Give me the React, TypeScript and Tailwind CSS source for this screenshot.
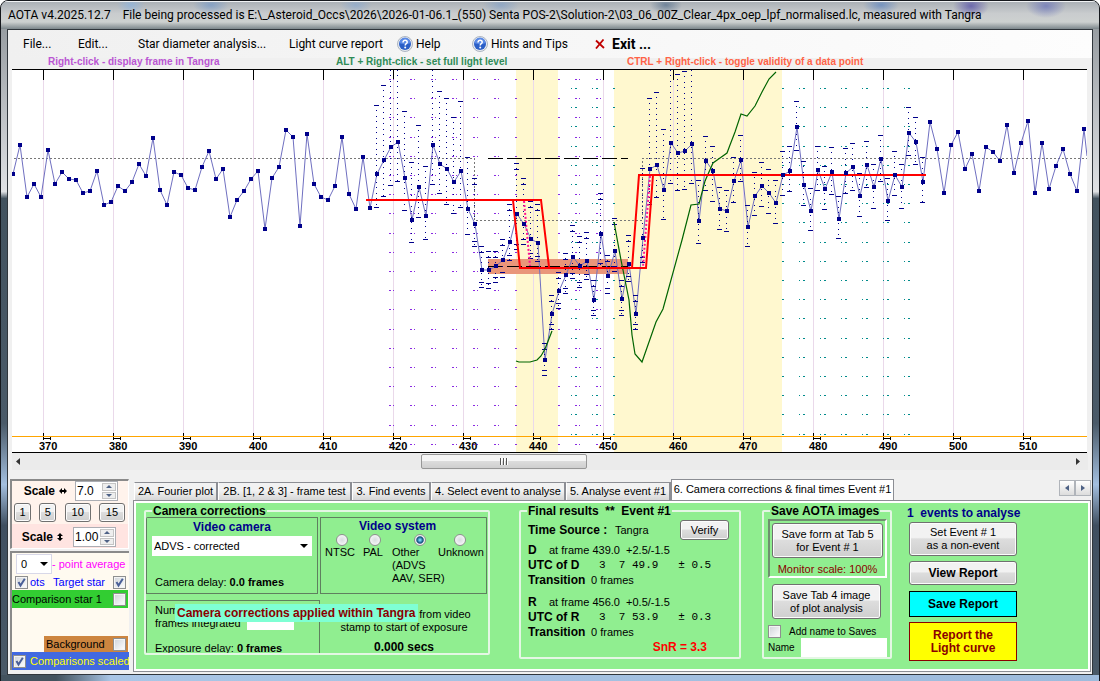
import { ReactNode } from "react";

const UI = "font-['Roboto','Noto_Sans',sans-serif]";
const SANS = "font-['Liberation_Sans',Arial,sans-serif]";

const X0 = 13;
const STEP = 7;

const flux = [
  174, 145, 197, 184, 197, 150, 184, 172, 179, 180, 193, 191, 171, 205, 202, 186, 191, 182, 164, 176,
  138, 190, 205, 172, 175, 188, 190, 167, 151, 179, 169, 217, 200, 191, 179, 171, 229, 178, 167, 130,
  137, 226, 134, 184, 197, 200, 186, 137, 194, 209, 157, 208, 174, 160, 147, 142, 178, 220, 187, 216,
  145, 164, 169, 182, 171, 209, 224, 270, 270, 266, 260, 242, 214, 224, 239, 243, 360, 314, 291, 275,
  257, 266, 261, 300, 234, 276, 251, 299, 264, 314, 238, 169, 165, 190, 143, 153, 151, 144, 221, 161,
  171, 209, 211, 181, 160, 227, 196, 186, 193, 203, 175, 171, 127, 185, 211, 170, 189, 172, 219, 173,
  167, 196, 165, 187, 159, 201, 175, 187, 133, 142, 182, 122, 149, 193, 145, 132, 169, 154, 191, 147,
  152, 161, 125, 173, 143, 121, 193, 143, 189, 166, 149, 174, 191, 129,
];

// [top, bottom] of each error bar, starting at frame index 52
const bars = [
  [105, 207], [85, 196], [70, 185], [70, 181], [111, 210], [162, 242], [125, 217], [166, 239], [70, 184],
  [91, 193], [98, 204], [117, 213], [101, 207], [157, 234], [178, 246], [246, 287], [251, 288], [251, 282],
  [239, 277], [204, 260], [163, 249], [178, 244], [201, 258], [204, 261], [343, 375], [295, 329], [272, 308],
  [253, 293], [225, 278], [236, 287], [232, 279], [280, 315], [193, 268], [255, 293], [218, 271], [280, 315],
  [235, 281], [295, 329], [168, 262], [98, 204], [92, 197], [129, 219], [70, 183], [74, 190], [71, 189],
  [70, 183], [180, 243], [136, 190], [146, 201], [187, 229], [190, 231], [157, 202], [135, 181], [205, 246],
  [172, 215], [162, 206], [169, 213], [180, 223], [151, 195], [146, 191], [101, 150], [161, 205], [188, 230],
  [146, 190], [166, 209], [147, 194], [196, 238], [148, 193], [143, 190], [173, 216], [141, 187], [164, 208],
  [135, 181], [178, 220], [151, 195], [164, 208], [107, 155], [117, 164], [157, 202],
];

const gridXs = Array.from({ length: 15 }, (_, i) => 43 + i * 70);
const violetYs = Array.from({ length: 20 }, (_, i) => Math.round(79 + i * 19.2));
const tealYs = Array.from({ length: 19 }, (_, i) => Math.round(88 + i * 19.2));
const violetXs = [389, 410, 431, 452, 473, 494, 515, 558, 575, 596];
const tealXs = [571, 592, 613, 782, 799, 820, 841, 862, 883, 904];

const LightCurve = () => {
  const line = flux.map((y, i) => `${X0 + i * STEP},${y}`).join(" ") + " 1087,156";
  return (
    <svg viewBox="12 69 1075 384" className="block w-full bg-white" role="img" aria-label="Light curve">
      <g shapeRendering="crispEdges">
        <rect x="516" y="70" width="42" height="382" fill="#fff8cf" />
        <rect x="614" y="70" width="168" height="382" fill="#fff8cf" />
        {gridXs.map((x) => (
          <g key={x}>
            <rect x={x} y="70" width="1" height="368" fill="#ead9ea" />
            <rect x={x} y="70" width="1" height="10" fill="#000" />
          </g>
        ))}
        {violetXs.map((x) =>
          violetYs.map((y) => (
            <g key={`${x}-${y}`} fill="#8a2be2">
              <rect x={x} y={y} width="2" height="1" />
              {x !== 515 && x !== 558 && <rect x={x + 4} y={y} width="1" height="1" />}
            </g>
          ))
        )}
        {tealXs.map((x) =>
          tealYs.map((y) => (
            <g key={`${x}-${y}`} fill="#008b8b">
              <rect x={x} y={y} width={x === 782 || x === 613 ? 2 : 1} height="1" />
              {x !== 782 && x !== 613 && <rect x={x + 4} y={y} width="2" height="1" />}
            </g>
          ))
        )}
        <path d="M14 158.5H474.5V220.5H642.5V158.5H1087" fill="none" stroke="#777" strokeDasharray="2 2" />
        <rect x="488" y="259" width="140" height="15" fill="#e9967a" />
        <path d="M488 158.5H628M488 266.5H628" stroke="#000" strokeDasharray="15 4" />
      </g>

      <polyline points={line} fill="none" stroke="#6f6fc0" strokeWidth="1" />

      <g shapeRendering="crispEdges">
        {bars.map(([top, bottom], i) => {
          const x = X0 + (i + 52) * STEP - 1;
          const twin = x > 470 && x < 645;
          return (
            <g key={x} fill="#00008b">
              <path d={`M${x + 0.5} ${top}V${bottom}`} stroke="#00008b" strokeDasharray="1 4 1 5" />
              {top > 70 && <rect x={x - 2} y={top} width="5" height="1" />}
              <rect x={x - 2} y={bottom} width="5" height="1" />
              {twin && <rect x={x - 2} y={top + 6} width="5" height="1" />}
              {twin && <rect x={x - 2} y={bottom - 5} width="5" height="1" />}
            </g>
          );
        })}
      </g>

      <path
        d="M516 361L519 362H530L537 360L541 356L545 349L552 331M614 222L621 260L629 300L632 335L635 354L642 362L656 322L663 309L682 240L691 205L699 204L705 181L713 163L720 158L727 153L730 145L735 132L741 114L747 116L755 106L762 92L769 79L776 72"
        fill="none"
        stroke="#006400"
        strokeWidth="1.2"
      />
      <path
        d="M366 200H541L549 267M513 200L520 268H646L653 175M632 268L639 175H926"
        fill="none"
        stroke="#f00"
        strokeWidth="2"
      />
      <path d="M524 201L530 266M650 176L643 267" stroke="#ff1493" strokeWidth="2" strokeDasharray="2 2" />

      {flux.map((y, i) => (
        <rect key={i} x={X0 + i * STEP - 2} y={y - 2} width="4" height="4" fill="#00008b" />
      ))}

      <g shapeRendering="crispEdges">
        <rect x="12" y="69" width="1075" height="1" fill="#000" />
        <rect x="12" y="452" width="1075" height="1" fill="#000" />
        {gridXs.map((x) => (
          <path key={x} d={`M${x + 0.5} 433V440M${x + 7.5} 437V440M${x} 438.5H${x + 7}`} stroke="#000" />
        ))}
        <rect x="12" y="436" width="1075" height="1" fill="#ffa500" />
      </g>
      {gridXs.map((x, i) => (
        <text key={x} x={x - 4} y="450" className={`${SANS} text-[11px] font-bold`}>
          {370 + i * 10}
        </text>
      ))}
    </svg>
  );
};

const HelpIcon = () => (
  <svg viewBox="0 0 16 16" className="h-4 w-4 shrink-0">
    <circle cx="8" cy="8" r="7.5" fill="#e8ecf2" stroke="#9aa4b4" strokeWidth="0.8" />
    <circle cx="8" cy="8" r="6" fill="#2b5fc7" />
    <path d="M2.5 7a5.500 5.500 0 0 1 11 0c-3 1.500-8 1.500-11 0z" fill="#5b8ae6" />
    <path d="M6 6.400c0-2.800 4.200-2.600 4.200-.2 0 1.400-2 1.600-2 3.200" fill="none" stroke="#fff" strokeWidth="1.5" />
    <circle cx="8.2" cy="11.5" r="1" fill="#fff" />
  </svg>
);

const CrossIcon = () => (
  <svg viewBox="0 0 10 10" className="h-[10px] w-[10px] shrink-0">
    <path d="M1 1.500L9 9M8.500 0.500L1 9.500" stroke="#c00000" strokeWidth="1.8" />
  </svg>
);

const MenuBar = () => (
  <nav
    className={`${UI} grid h-7 grid-cols-[55px_60px_151px_108px_75px_123px_1fr] items-center bg-linear-to-r from-[#f0f0f0] to-[#fdfdfd] pl-[15px] text-xs whitespace-nowrap`}
  >
    <button className="text-left">File...</button>
    <button className="text-left">Edit...</button>
    <button className="text-left">Star diameter analysis...</button>
    <button className="text-left">Light curve report</button>
    <button className="flex items-center gap-[3px]">
      <HelpIcon />
      Help
    </button>
    <button className="flex items-center gap-[3px]">
      <HelpIcon />
      Hints and Tips
    </button>
    <button className="flex items-center gap-[7px]">
      <CrossIcon />
      <span className="text-sm font-bold">Exit ...</span>
    </button>
  </nav>
);

const Hints = () => (
  <div className={`${SANS} flex h-[11px] pl-10 text-[10px] leading-[8px] font-bold whitespace-nowrap`}>
    <span className="w-72 text-[#ba55d3]">Right-click - display frame in Tangra</span>
    <span className="w-[291px] text-[#2e8b57]">ALT + Right-click - set full light level</span>
    <span className="text-[#ff6347]">CTRL + Right-click - toggle validity of a data point</span>
  </div>
);

const ScrollBar = () => (
  <div className="mx-1 flex h-[17px] items-center justify-between bg-[#ebebeb] px-1">
    <button aria-label="Scroll left" className="w-2">
      <svg viewBox="0 0 4 7" className="h-[7px] w-1"><path d="M4 0V7L0 3.500z" fill="#333" /></svg>
    </button>
    <div className="flex h-full flex-1 pl-[397px]">
      <button
        aria-label="Scroll thumb"
        className="mt-px flex h-[15px] w-[166px] items-center justify-center gap-px rounded-xs border border-[#979797] bg-linear-to-b from-[#f5f5f5] from-45% via-[#dcdcdc] via-50% to-[#cfcfcf]"
      >
        <i className="h-[7px] w-0.5 border-l border-[#555] bg-white" />
        <i className="h-[7px] w-0.5 border-l border-[#555] bg-white" />
        <i className="h-[7px] w-0.5 border-l border-[#555] bg-white" />
      </button>
    </div>
    <button aria-label="Scroll right" className="w-2">
      <svg viewBox="0 0 4 7" className="h-[7px] w-1"><path d="M0 0V7L4 3.500z" fill="#333" /></svg>
    </button>
  </div>
);

const Check = ({ label, checked = false }: { label: string; checked?: boolean }) => (
  <span className="relative inline-block h-[13px] w-[13px] shrink-0">
    <input
      type="checkbox"
      aria-label={label}
      defaultChecked={checked}
      className="peer block h-[13px] w-[13px] appearance-none border border-[#8e8f8f] bg-linear-to-br from-[#cfd3d8] to-white shadow-[inset_0_0_0_1px_#f4f4f4]"
    />
    <svg viewBox="0 0 13 13" className="pointer-events-none absolute inset-0 hidden peer-checked:block">
      <path d="M3.500 6L5.500 9.500L9.800 2.800" fill="none" stroke="#4a5f97" strokeWidth="2" />
    </svg>
  </span>
);

const Spinner = ({ label, value }: { label: string; value: string }) => (
  <span className="flex h-5 w-[43px] border border-[#abadb3] bg-white">
    <input aria-label={label} defaultValue={value} className="w-[26px] pl-px text-xs outline-none" />
    <span className="flex w-[14px] flex-col gap-px py-px">
      <button aria-label={`${label} up`} className="flex flex-1 items-center justify-center border border-[#c4c4c4] bg-[#eee]">
        <svg viewBox="0 0 6 3" className="h-[3px] w-1.5"><path d="M0 3L3 0L6 3z" fill="#4d6185" /></svg>
      </button>
      <button aria-label={`${label} down`} className="flex flex-1 items-center justify-center border border-[#c4c4c4] bg-[#eee]">
        <svg viewBox="0 0 6 3" className="h-[3px] w-1.5"><path d="M0 0L3 3L6 0z" fill="#4d6185" /></svg>
      </button>
    </span>
  </span>
);

const BTN =
  "rounded-[3px] border border-[#707070] bg-linear-to-b from-[#f2f2f2] from-45% via-[#dddddd] via-50% to-[#cfcfcf] shadow-[inset_0_0_0_1px_#fcfcfc]";

const SidePanels = () => (
  <aside className="mb-0.5 ml-0.5 flex w-[119px] shrink-0 flex-col gap-0.5 overflow-hidden text-xs">
    <div className="border-t-2 border-l-2 border-[#8a8a8a] border-r border-b border-r-white border-b-white bg-[#ffe4e1]">
      <div className="bg-[#fff3ec] pb-[2px]">
        <div className="flex items-center justify-end gap-1 pr-2.5">
          <span className="font-bold">Scale</span>
          <svg viewBox="0 0 8 6" className="mr-1 h-1.5 w-2"><path d="M0 3L3 0V2H5V0L8 3L5 6V4H3V6z" /></svg>
          <Spinner label="Horizontal scale" value="7.0" />
        </div>
        <div className="mt-[2px] flex justify-between pr-[3px] pl-[2px] text-[11px] leading-[17px]">
          <button className={`${BTN} w-[17px]`}>1</button>
          <button className={`${BTN} w-[17px]`}>5</button>
          <button className={`${BTN} w-[26px]`}>10</button>
          <button className={`${BTN} w-[26px]`}>15</button>
        </div>
      </div>
      <div className="flex items-center justify-end gap-1 pt-[3px] pr-3 pb-px">
        <span className="font-bold">Scale</span>
        <svg viewBox="0 0 6 8" className="mr-1.5 h-2 w-1.5"><path d="M3 0L6 3H4V5H6L3 8L0 5H2V3H0z" /></svg>
        <Spinner label="Vertical scale" value="1.00" />
      </div>
    </div>

    <div className="flex flex-1 flex-col border-t-2 border-l-2 border-[#8a8a8a] bg-[#fffaf0] text-[11px] whitespace-nowrap">
      <div className="flex items-center pt-px pl-1">
        <span className="relative">
          <select aria-label="Points averaged" className="h-5 w-9 appearance-none border border-[#d8d8e8] bg-white pl-1">
            <option>0</option>
          </select>
          <svg viewBox="0 0 8 4" className="pointer-events-none absolute top-2 right-1 h-1 w-2"><path d="M0 0H8L4 4z" /></svg>
        </span>
        <span className="text-[#ff00ff]">- point average</span>
      </div>
      <div className="flex h-4 items-center pr-[3px] pl-[3px] text-[#0000ff]">
        <Check label="Plots" checked />
        <span className="flex-1 pl-0.5">ots</span>
        <span className="pr-2">Target star</span>
        <Check label="Target star" checked />
      </div>
      <label className="mr-px flex h-[18px] items-center justify-between bg-[#32cd32] pr-[2px]">
        Comparison star 1 <Check label="Comparison star 1" />
      </label>
      <label className="mt-auto mr-px ml-8 flex h-4 items-center justify-between bg-[#cd853f] pr-[2px] pl-0.5">
        Background <Check label="Background" />
      </label>
      <label className="flex h-[18px] items-center gap-1 overflow-hidden bg-[#4169e1] pl-px text-[#ffff00]">
        <Check label="Comparisons scaled" checked /> Comparisons scaled
      </label>
    </div>
  </aside>
);

const tabs = ["2A. Fourier plot", "2B. [1, 2 & 3] - frame test", "3. Find events", "4. Select event to analyse", "5. Analyse event #1"];
const tabWidths = ["w-[84px]", "w-[134px]", "w-[79px]", "w-[135px]", "w-[105px]"];

const Tabs = () => (
  <div className="flex items-end pl-px text-[11px] whitespace-nowrap" role="tablist">
    {tabs.map((tab, i) => (
      <button
        key={tab}
        role="tab"
        className={`${tabWidths[i]} h-[18px] border-t border-r-2 border-l border-[#8c8e94] border-l-white bg-linear-to-b from-[#f2f2f2] from-45% to-[#d6d6d6]`}
      >
        {tab}
      </button>
    ))}
    <button role="tab" aria-selected="true" className="h-[21px] w-[223px] border-t border-r border-l border-[#8c8e94] bg-white pb-px">
      6. Camera corrections & final times Event #1
    </button>
    <div className="mb-[4px] ml-auto flex">
      <button aria-label="Previous tabs" className="flex h-4 w-4 items-center justify-center border border-[#b0b4ba] bg-linear-to-b from-white to-[#dcdcdc]">
        <svg viewBox="0 0 4 6" className="h-1.5 w-1"><path d="M4 0V6L0 3z" fill="#4d6185" /></svg>
      </button>
      <button aria-label="Next tabs" className="flex h-4 w-4 items-center justify-center border border-[#b0b4ba] bg-linear-to-b from-white to-[#dcdcdc]">
        <svg viewBox="0 0 4 6" className="h-1.5 w-1"><path d="M0 0V6L4 3z" fill="#4d6185" /></svg>
      </button>
    </div>
  </div>
);

const Group = ({ title, className, children }: { title: ReactNode; className: string; children: ReactNode }) => (
  <fieldset className={`${className} min-w-0 rounded-xs border-2 border-[#e4f7e4]`}>
    <legend className="ml-1.5 px-px text-xs leading-3 font-bold whitespace-pre">{title}</legend>
    {children}
  </fieldset>
);

const systems = [
  { name: "NTSC", text: "NTSC", radio: "ml-[11px]" },
  { name: "PAL", text: "PAL", radio: "ml-1.5" },
  { name: "Other", text: "Other\n(ADVS\nAAV, SER)", radio: "ml-[22px]" },
  { name: "Unknown", text: "Unknown", radio: "ml-4" },
];

const CameraCorrections = () => (
  <Group title="Camera corrections" className="relative h-[150px] w-[346px] shrink-0 overflow-hidden">
    <div className="flex gap-0.5 pr-px text-[11px]">
      <div className="h-[77px] w-[174px] border border-[#5f7f5f] px-[5px]">
        <label htmlFor="camera" className="block text-center text-xs leading-[18px] font-bold text-[#00008b]">
          Video camera
        </label>
        <div className="relative">
          <select id="camera" className="h-5 w-full appearance-none bg-white pl-[2px]">
            <option>ADVS - corrected</option>
          </select>
          <svg viewBox="0 0 8 4" className="pointer-events-none absolute top-2 right-1 h-1 w-2"><path d="M0 0H8L4 4z" /></svg>
        </div>
        <p className="pt-[18px] pl-[3px] leading-4">
          Camera delay: <b>0.0 frames</b>
        </p>
      </div>
      <div className="h-[77px] flex-1 border border-[#5f7f5f] pl-1">
        <p className="pr-4 text-center text-xs leading-4 font-bold text-[#00008b]">Video system</p>
        <div className="grid grid-cols-[38px_29px_46px_48px] leading-[13px] whitespace-pre">
          {systems.map((s) => (
            <label key={s.name}>
              <input
                type="radio"
                name="system"
                defaultChecked={s.name === "Other"}
                className={`${s.radio} block h-3 w-3 appearance-none rounded-full border border-[#8e8f8f] bg-[radial-gradient(#d8dce0,#ffffff)] checked:bg-[radial-gradient(#6fd0f0_10%,#0c4a78_45%,#f0f0f0_60%)]`}
              />
              {s.text}
            </label>
          ))}
        </div>
      </div>
    </div>
    <div className="mt-1.5 flex text-[11px] leading-[13px]">
      <div className="w-[174px] border border-b-0 border-[#5f7f5f] pt-[3px] pl-2">
        <p>Num</p>
        <p className="flex gap-1.5">
          frames integrated <input aria-label="Frames integrated" className="h-2 w-[47px] self-end bg-white" />
        </p>
        <p className="pt-3">
          Exposure delay: <b>0 frames</b>
        </p>
      </div>
      <div className="flex-1 pt-2 text-center">
        <p className="pl-[82px]">from video</p>
        <p>stamp to start of exposure</p>
        <p className="pt-[7px] text-xs leading-[13px] font-bold">0.000 secs</p>
      </div>
    </div>
    <strong className="absolute top-[87px] left-[29px] bg-[#7fffd4] px-0.5 text-xs leading-[18px] whitespace-nowrap text-[#8b0000]">
      Camera corrections applied within Tangra
    </strong>
  </Group>
);

const results = [
  { id: "D", frame: "at frame 439.0  +2.5/-1.5", utc: "3  7 49.9   ± 0.5" },
  { id: "R", frame: "at frame 456.0  +0.5/-1.5", utc: "3  7 53.9   ± 0.3" },
];

const FinalResults = () => (
  <Group title="Final results  **  Event #1" className="ml-[29px] w-[222px] shrink-0">
    <div className="pr-2.5 pb-0.5 pl-[7px] text-[11px] leading-[15px] whitespace-pre">
      <div className="flex h-[26px] items-center">
        <b className="w-[87px] text-xs">Time Source :</b>
        Tangra
        <button className={`${BTN} ml-auto h-5 w-[49px]`}>Verify</button>
      </div>
      {results.map((r) => (
        <div key={r.id} className="pb-[7px]">
          <p className="flex">
            <b className="w-[21px] text-xs leading-[15px]">{r.id}</b>
            {r.frame}
          </p>
          <p className="flex">
            <b className="w-[71px] text-xs leading-[15px]">UTC of {r.id}</b>
            <span className="font-['Liberation_Mono',monospace]">{r.utc}</span>
          </p>
          <p className="flex">
            <b className="w-[63px] text-xs leading-[15px]">Transition</b>0 frames
          </p>
        </div>
      ))}
      <p className="-mt-2 pr-[22px] text-right text-xs font-bold text-[#ff0000]">SnR = 3.3</p>
    </div>
  </Group>
);

const SaveImages = () => (
  <Group title="Save AOTA images" className="ml-[21px] w-[130px] shrink-0">
    <div className="pr-[3px] pl-1 text-[11px] leading-[13px]">
      <div className="mt-0.5 border-2 border-[#6f8f6f] border-r-white border-b-white p-0.5 pb-0 text-center">
        <button className={`${BTN} h-[35px] w-full`}>
          Save form at Tab 5<br />
          for Event # 1
        </button>
        <p className="pt-1 leading-[14px] whitespace-nowrap text-[#8b0000]">Monitor scale: 100%</p>
      </div>
      <button className={`${BTN} mx-1 mt-1.5 h-[35px] w-[109px]`}>
        Save Tab 4 image
        <br />
        of plot analysis
      </button>
      <label className="mt-1.5 flex items-center gap-2 text-[10px] whitespace-nowrap">
        <Check label="Add name to Saves" />
        Add name to Saves
      </label>
      <label className="flex items-center text-[10px]">
        Name <input className="ml-auto h-[19px] w-[86px] bg-white" />
      </label>
    </div>
  </Group>
);

const Reports = () => (
  <div className="ml-4 flex w-[110px] shrink-0 flex-col items-stretch px-px text-[11px] leading-[13px]">
    <p className="-ml-0.5 pb-px text-xs leading-4 font-bold whitespace-pre text-[#00008b]">1  events to analyse</p>
    <button className={`${BTN} h-[34px]`}>
      Set Event # 1<br />
      as a non-event
    </button>
    <button className={`${BTN} mt-[5px] h-6 text-xs font-bold`}>View Report</button>
    <button className="mt-1.5 h-[26px] border border-black bg-[#00ffff] text-xs font-bold">Save Report</button>
    <button className="mt-[5px] h-[39px] border border-[#8b0000] bg-[#ffff00] text-xs leading-[13px] font-bold text-[#8b0000]">
      Report the
      <br />
      Light curve
    </button>
  </div>
);

export default function App() {
  return (
    <div className="flex min-h-screen flex-col overflow-hidden rounded-t-lg border border-[#15181d] bg-[linear-gradient(to_bottom,#8c9297,#dfe1e4_28%,#42525e_29%,#4a5a68_62%,#a3bfdf_71%,#3f4f60_77%,#4a5a68)] px-[6px] text-black">
      <header
        className={`${UI} -mx-[6px] flex h-[28px] items-center bg-[radial-gradient(14px_9px_at_130px_4px,#8fb4dccc,transparent),radial-gradient(18px_9px_at_210px_4px,#6f96c8aa,transparent),radial-gradient(16px_8px_at_355px_4px,#88a8d0aa,transparent),radial-gradient(18px_9px_at_500px_4px,#7f9fc8aa,transparent),radial-gradient(16px_9px_at_665px_4px,#4f6a88aa,transparent),radial-gradient(18px_9px_at_880px_4px,#5f86c0bb,transparent),radial-gradient(18px_12px_at_970px_5px,#5a55a8cc,transparent),radial-gradient(20px_12px_at_1045px_5px,#6f78b8cc,transparent),linear-gradient(to_bottom,#a8aeb4,#c9ccce_45%,#cdd1d0_75%,#7d878c)] pl-[7px] text-xs whitespace-pre shadow-[inset_0_1px_0_#f0f2f4]`}
      >
        <span>AOTA v4.2025.12.7</span>
        <span className="pl-[12px]">
          File being processed is E:\_Asteroid_Occs\2026\2026-01-06.1_(550) Senta POS-2\Solution-2\03_06_00Z_Clear_4px_oep_lpf_normalised.lc, measured with Tangra
        </span>
      </header>
      <main className={`${SANS} flex flex-1 flex-col border border-[#30363c] bg-[#f0f0f0] text-black`}>
        <MenuBar />
        <Hints />
        <div className="mr-[5px] ml-[4px]">
          <LightCurve />
        </div>
        <ScrollBar />
        <div className="flex flex-1 items-stretch gap-1 pt-[9px] pb-0.5">
          <SidePanels />
          <section className="mr-px flex min-w-0 flex-1 flex-col">
            <Tabs />
            <div className="flex flex-1 flex-col border border-[#8c8e94] bg-white p-0.5">
              <div className="flex flex-1 items-start bg-[#90ee90] px-2 pt-0.5 pb-2">
                <CameraCorrections />
                <FinalResults />
                <SaveImages />
                <Reports />
              </div>
            </div>
          </section>
        </div>
      </main>
      <footer className="-mx-[6px] h-[7px] bg-linear-to-r from-[#42525e] from-5% via-[#a9c6e6] via-10% to-[#9dbbdc]" />
    </div>
  );
}
